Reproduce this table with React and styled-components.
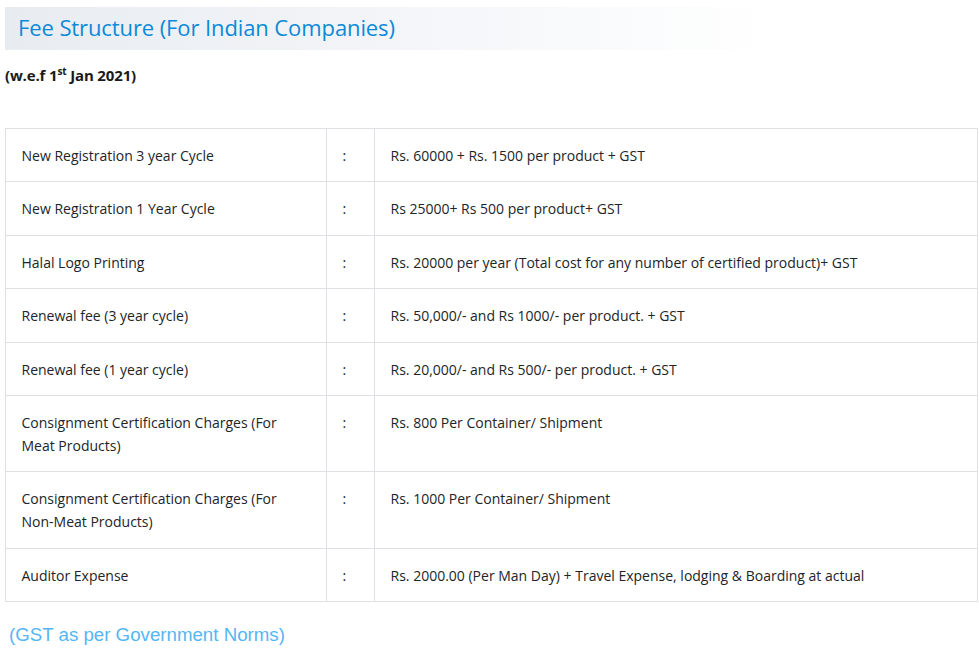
import React from "react";
import styled, { createGlobalStyle } from "styled-components";

const GlobalStyle = createGlobalStyle`
  body {
    margin: 0;
    background: #fff;
    font-family: "Open Sans", "Noto Sans", sans-serif;
    color: #212529;
  }
`;

const Page = styled.div`
  padding: 7px 1px 0 5px;
`;

const TitleBar = styled.div`
  width: 770px;
  height: 43px;
  display: flex;
  align-items: center;
  padding-left: 13px;
  box-sizing: border-box;
  background: linear-gradient(to right, #e8ecf1 0%, #f3f5f8 50%, #ffffff 100%);
`;

const Title = styled.h2`
  margin: 0 0 3px;
  font-family: "Open Sans", sans-serif;
  font-weight: 400;
  font-size: 22px;
  letter-spacing: -0.1px;
  color: #0b8ad9;
`;

const Effective = styled.p`
  margin: 15px 0 0;
  font-family: "Open Sans", sans-serif;
  font-weight: 700;
  font-size: 15px;
  line-height: 20px;
  letter-spacing: -0.15px;
  color: #1a1a1a;

  sup {
    font-size: 10px;
    line-height: 0;
  }
`;

const FeeTable = styled.table`
  margin-top: 43px;
  width: 973px;
  border-collapse: collapse;
  table-layout: fixed;
  font-size: 14px;
  line-height: 23px;
`;

const Cell = styled.td`
  width: ${(p) => (p.$width ? `${p.$width}px` : "auto")};
  border: 1px solid #dfe0e4;
  padding: 15px 16px 14.4px 15.5px;
  vertical-align: top;
`;

const Note = styled.p`
  margin: 22px 0 0 4px;
  font-family: "Liberation Sans", Arial, sans-serif;
  font-size: 18.7px;
  line-height: 22px;
  color: #55b6f3;
`;

const fees = [
  ["New Registration 3 year Cycle", "Rs. 60000 + Rs. 1500 per product + GST"],
  ["New Registration 1 Year Cycle", "Rs 25000+ Rs 500 per product+ GST"],
  [
    "Halal Logo Printing",
    "Rs. 20000 per year (Total cost for any number of certified product)+ GST",
  ],
  ["Renewal fee (3 year cycle)", "Rs. 50,000/- and Rs 1000/- per product. + GST"],
  ["Renewal fee (1 year cycle)", "Rs. 20,000/- and Rs 500/- per product. + GST"],
  [
    "Consignment Certification Charges (For Meat Products)",
    "Rs. 800 Per Container/ Shipment",
  ],
  [
    "Consignment Certification Charges (For Non-Meat Products)",
    "Rs. 1000 Per Container/ Shipment",
  ],
  [
    "Auditor Expense",
    "Rs. 2000.00 (Per Man Day) + Travel Expense, lodging & Boarding at actual",
  ],
];

function App() {
  return (
    <>
      <GlobalStyle />
      <Page>
        <TitleBar>
          <Title>Fee Structure (For Indian Companies)</Title>
        </TitleBar>
        <Effective>
          (w.e.f 1<sup>st</sup> Jan 2021)
        </Effective>
        <FeeTable>
          <tbody>
            {fees.map(([label, amount]) => (
              <tr key={label}>
                <Cell $width={288.5}>{label}</Cell>
                <Cell $width={15.5}>:</Cell>
                <Cell>{amount}</Cell>
              </tr>
            ))}
          </tbody>
        </FeeTable>
        <Note>(GST as per Government Norms)</Note>
      </Page>
    </>
  );
}

export default App;
